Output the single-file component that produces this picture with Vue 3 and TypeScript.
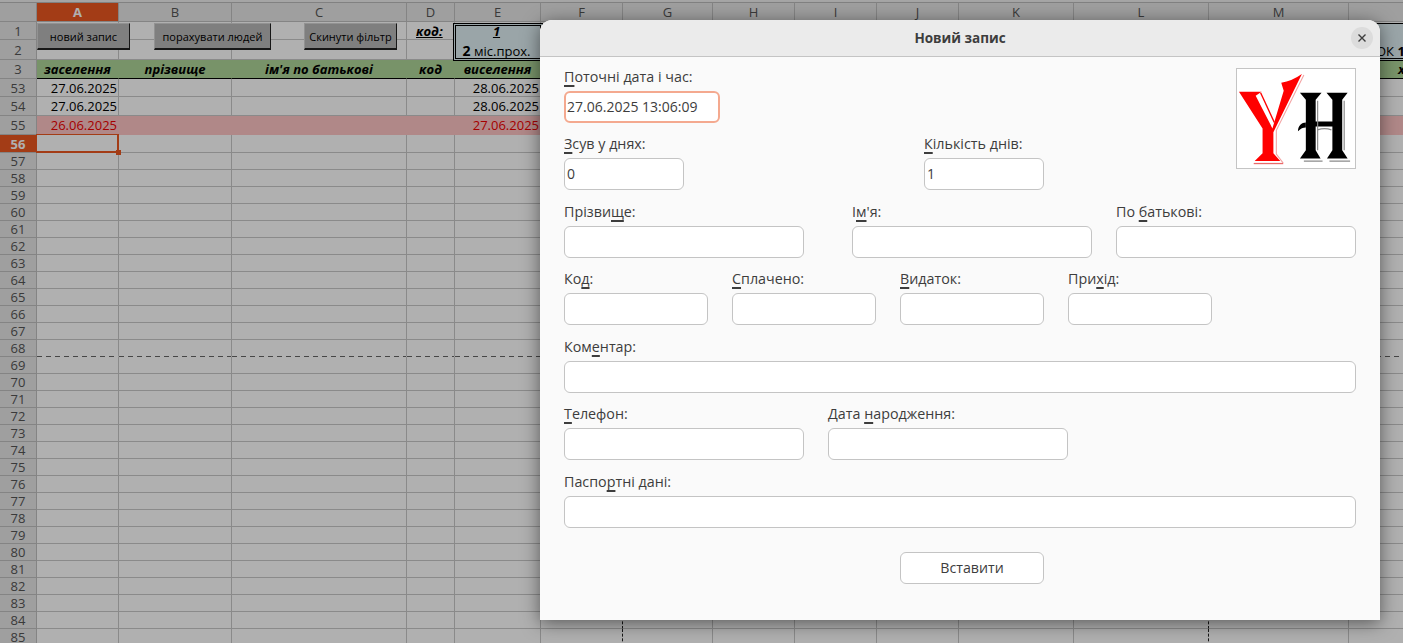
<template>
  <div class="screen">
    <div class="sheet">
      <div class="corner"></div>
      <div
        v-for="c in columns"
        :key="c"
        class="col-head"
        :class="{ 'col-head--active': c === 'A' }"
      >{{ c }}</div>

      <template v-for="r in rows" :key="r.label">
        <div class="row-head" :class="{ 'row-head--active': r.label === '56' }">{{ r.label }}</div>
        <div
          v-for="c in columns"
          :key="c"
          class="cell"
          :class="[r.kind, `col-${c}`, { 'cell--page': r.label === '68', 'cell--vbreak': (c === 'F' || c === 'L') && r.kind === 'plain' }]"
        >{{ cellText(r.label, c) }}<i v-if="r.label === '56' && c === 'A'" class="cursor"></i></div>
      </template>
    </div>

    <div class="drawing-layer">
      <button class="sheet-btn btn-new">новий запис</button>
      <button class="sheet-btn btn-count">порахувати людей</button>
      <button class="sheet-btn btn-reset">Скинути фільтр</button>
      <span class="code-label">код:</span>
      <div class="code-box">
        <u>1</u>
        <span><b>2</b> міс.прох.</span>
      </div>
      <div class="ok-box">ОК <b>1</b></div>
    </div>

    <div class="overlay"></div>

    <section class="dialog">
      <header class="dialog-title">
        <span>Новий запис</span>
        <button class="close-btn" title="Закрити">
          <svg viewBox="0 0 16 16" width="16" height="16"><path d="M4.5 4.5l7 7M11.5 4.5l-7 7" stroke="#3d3d3d" stroke-width="1.4" fill="none"/></svg>
        </button>
      </header>

      <form class="form" @submit.prevent>
        <div class="top-block">
          <div class="top-left">
            <label class="field now-field">
              <span><u>П</u>оточні дата і час:</span>
              <input class="input input--focus" value="27.06.2025 13:06:09" />
            </label>
            <div class="row row-shift">
              <label class="field">
                <span><u>З</u>сув у днях:</span>
                <input class="input" value="0" />
              </label>
              <label class="field">
                <span><u>К</u>ількість днів:</span>
                <input class="input" value="1" />
              </label>
            </div>
          </div>
          <svg class="logo" viewBox="0 0 120 100" preserveAspectRatio="none">
            <!-- Y -->
            <path d="M2 23H25L19 27L36 60L47.5 22L45 14Q56 12 66 5L37 64V85L44 93H18L26 85V60Z" fill="#f00"/>
            <path d="M24 24L38 54" stroke="#f00" stroke-width="1.4" fill="none"/>
            <path d="M68 6L40 62V86L47 95" stroke="#f3a3a3" stroke-width="1.1" fill="none"/>
            <path d="M17 95.5H47" stroke="#ea6a6a" stroke-width="1.3"/>
            <!-- H -->
            <path d="M64 24H86L80 31V53H97V31L91 24H112.5L107 31V82L112.5 90.5H91.5L97 82V58H80V82L85 90.5H64L70 82V31Z" fill="#000"/>
            <path d="M62 63C62 57 66 54 70 54V59C67 59 65 60 62 63Z" fill="#000"/>
            <path d="M82 32V82M109 32V82M82 61.5C86 60 92 60 96 61.5M68 93H87M94 93H115" stroke="#8a8a8a" stroke-width="1.2" fill="none"/>
          </svg>
        </div>

        <div class="row row-names">
          <label class="field"><span>Прізви<u>щ</u>е:</span><input class="input" /></label>
          <label class="field"><span>І<u>м</u>'я:</span><input class="input" /></label>
          <label class="field"><span>По <u>б</u>атькові:</span><input class="input" /></label>
        </div>

        <div class="row row-money">
          <label class="field"><span>Ко<u>д</u>:</span><input class="input" /></label>
          <label class="field"><span><u>С</u>плачено:</span><input class="input" /></label>
          <label class="field"><span><u>В</u>идаток:</span><input class="input" /></label>
          <label class="field"><span>При<u>х</u>ід:</span><input class="input" /></label>
        </div>

        <label class="field"><span>Ком<u>е</u>нтар:</span><input class="input" /></label>

        <div class="row row-phone">
          <label class="field"><span><u>Т</u>елефон:</span><input class="input" /></label>
          <label class="field"><span>Дата <u>н</u>ародження:</span><input class="input" /></label>
        </div>

        <label class="field"><span>Паспо<u>р</u>тні дані:</span><input class="input" /></label>

        <div class="actions">
          <button class="submit-btn">Вставити</button>
        </div>
      </form>
    </section>
  </div>
</template>

<script setup lang="ts">
type RowKind = 'tall' | 'head' | 'data' | 'plain' | 'alert'

const columns = ['A', 'B', 'C', 'D', 'E', 'F', 'G', 'H', 'I', 'J', 'K', 'L', 'M', 'N']

const rows: { label: string; kind: RowKind }[] = [
  { label: '1', kind: 'tall' },
  { label: '2', kind: 'tall' },
  { label: '3', kind: 'head' },
  { label: '53', kind: 'data' },
  { label: '54', kind: 'data' },
  { label: '55', kind: 'alert' },
  { label: '56', kind: 'data' },
]
for (let i = 57; i <= 85; i++) rows.push({ label: String(i), kind: 'plain' })

const cells: Record<string, Record<string, string>> = {
  '3': { A: 'заселення', B: 'прізвище', C: "ім'я по батькові", D: 'код', E: 'виселення', N: 'х' },
  '53': { A: '27.06.2025', E: '28.06.2025' },
  '54': { A: '27.06.2025', E: '28.06.2025' },
  '55': { A: '26.06.2025', E: '27.06.2025' },
}

function cellText(row: string, col: string) {
  return cells[row]?.[col] ?? ''
}
</script>

<style>
html, body {
  margin: 0;
  overflow: hidden;
}
</style>

<style scoped>
.screen {
  position: relative;
  width: 1403px;
  height: 643px;
  overflow: hidden;
  background: #f0f0f0;
  font-family: "Open Sans", "Noto Sans", sans-serif;
}

/* sheet */
.sheet {
  isolation: isolate;
  display: grid;
  grid-template-columns: 37px 82px 113px 175px 48px 86px 82px 90px 82px 82px 82px 115px 135px 140px 140px;
  grid-template-rows: 22px 18px 20px 19px 18px 19px 19px 18px repeat(29, 17px);
  font-size: 13px;
  color: #000;
}

.corner,
.col-head,
.row-head {
  background: #e6e6e6;
  color: #555;
  display: flex;
  align-items: center;
  justify-content: center;
  box-sizing: border-box;
  border-right: 1px solid #c0c0c0;
  border-bottom: 1px solid #c0c0c0;
}

.corner,
.col-head {
  margin-top: 2px;
  border-top: 1px solid #bcbcbc;
}

.col-head--active,
.row-head--active {
  background: #ec5721;
  color: #fff;
  font-weight: 700;
}

.cell {
  position: relative;
  box-sizing: border-box;
  border-right: 1px solid #c8c8c8;
  border-bottom: 1px solid #c8c8c8;
  background: #fff;
  text-align: right;
  line-height: 18px;
  white-space: nowrap;
  padding-right: 1px;
}

.cell.head {
  background: #aed598;
  border-right-color: #aed598;
  border-bottom: 1px solid #000;
  text-align: center;
  font-weight: 700;
  font-style: italic;
  padding: 0;
}

.cell.head.col-N {
  text-align: left;
  padding-left: 49px;
}

.cell.alert {
  background: #ffc5c5;
  border-right-color: #ffc5c5;
  border-bottom-color: #ffc5c5;
  color: #f00000;
}

.cell--page {
  border-bottom-color: transparent;
  background-image: linear-gradient(90deg, #666 5px, transparent 5px);
  background-origin: border-box;
  background-clip: border-box;
  background-position: 0 100%;
  background-size: 9px 1px;
  background-repeat: repeat-x;
}

.cell--vbreak {
  border-right-color: #222;
  border-right-style: dashed;
}

.cursor {
  position: absolute;
  inset: -1px;
  z-index: 2;
  border: 1px solid #ec5721;
  border-right-width: 2px;
  border-bottom-width: 2px;
}

.cursor::after {
  content: "";
  position: absolute;
  right: -4px;
  bottom: -4px;
  width: 5px;
  height: 5px;
  background: #ec5721;
}

/* drawing layer of the sheet */
.drawing-layer {
  position: absolute;
  inset: 0;
}

.sheet-btn {
  position: absolute;
  top: 23px;
  height: 27px;
  box-sizing: border-box;
  padding: 0;
  font-family: "Open Sans", sans-serif;
  font-size: 11px;
  color: #000;
  background: #b8b8b8;
  border: 1px solid #d4d4d4;
  border-right: 1px solid #222;
  border-bottom: 2px solid #222;
}

.btn-new { left: 37px; width: 93px; }
.btn-count { left: 154px; width: 117px; }
.btn-reset { left: 304px; width: 93px; }

.code-label {
  position: absolute;
  left: 416px;
  top: 22px;
  font-size: 13px;
  font-weight: 700;
  font-style: italic;
  text-decoration: underline;
}

.code-box {
  position: absolute;
  left: 453px;
  top: 23px;
  width: 90px;
  height: 38px;
  box-sizing: border-box;
  padding-right: 3px;
  border: 3px double #000;
  background: #dfeff3;
  display: flex;
  flex-direction: column;
  align-items: center;
  font-size: 13px;
  line-height: 18px;
}

.code-box u {
  margin-top: -4px;
  font-weight: 700;
  font-style: italic;
}

.code-box span {
  margin-top: 2px;
}

.code-box b {
  font-size: 14px;
}

.ok-box {
  position: absolute;
  left: 1340px;
  top: 23px;
  right: 0;
  height: 38px;
  box-sizing: border-box;
  padding: 18px 0 0 36px;
  border-top: 1px solid #000;
  border-bottom: 3px double #000;
  background: #dfeff3;
  font-size: 13px;
  line-height: 18px;
  white-space: nowrap;
}

.overlay {
  position: absolute;
  inset: 0;
  background: rgba(0, 0, 0, 0.31);
}

/* dialog */
.dialog {
  position: absolute;
  left: 540px;
  top: 20px;
  width: 840px;
  height: 600px;
  background: #fafafa;
  border-radius: 12px 12px 0 0;
  box-shadow: 0 3px 18px rgba(0, 0, 0, 0.5);
  color: #3d3d3d;
  font-size: 14.3px;
}

.dialog-title {
  position: relative;
  height: 36px;
  display: flex;
  align-items: center;
  justify-content: center;
  background: #ebebeb;
  border-bottom: 1px solid #c4c4c4;
  border-radius: 12px 12px 0 0;
  font-weight: 700;
  font-size: 13.5px;
  line-height: 34px;
}

.close-btn {
  position: absolute;
  right: 7px;
  top: 7px;
  width: 22px;
  height: 22px;
  padding: 0;
  display: flex;
  align-items: center;
  justify-content: center;
  border: 0;
  border-radius: 50%;
  background: #dcdcdc;
}

.form {
  display: flex;
  flex-direction: column;
  gap: 12.5px;
  padding: 10.9px 24px 0;
}

.field {
  display: flex;
  flex-direction: column;
  gap: 3px;
}

.field > span {
  height: 20px;
  line-height: 18px;
  white-space: nowrap;
}

.field u {
  text-decoration-thickness: 2px;
  text-underline-offset: 3px;
  text-decoration-skip-ink: none;
}

.input {
  box-sizing: border-box;
  width: 100%;
  height: 32px;
  padding: 0 2px 2px;
  background: #fff;
  border: 1px solid #c4c4c4;
  border-radius: 6px;
  font-family: inherit;
  font-size: 14px;
  color: #3d3d3d;
  outline: none;
}

.input--focus {
  padding: 0 1px;
  border: 2px solid #f4a98f;
}

.top-block {
  display: flex;
  justify-content: space-between;
  align-items: flex-start;
}

.top-left {
  display: flex;
  flex-direction: column;
  gap: 12.5px;
}

.now-field {
  width: 156px;
}

.row {
  display: grid;
  align-items: start;
}

.row-shift {
  grid-template-columns: 120px 120px;
  column-gap: 240px;
}

.row-names {
  grid-template-columns: 264px 240px 240px;
  column-gap: 24px;
}

.row-names > .field:first-child {
  width: 240px;
}

.row-money {
  grid-template-columns: repeat(4, 144px);
  column-gap: 24px;
}

.row-phone {
  grid-template-columns: 240px 240px;
  column-gap: 24px;
}

.logo {
  box-sizing: border-box;
  width: 120px;
  height: 101px;
  border: 1px solid #c4c4c4;
  background: #fff;
}

.actions {
  display: flex;
  justify-content: center;
  margin-top: 11.6px;
  padding-left: 24px;
}

.submit-btn {
  box-sizing: border-box;
  width: 144px;
  height: 32px;
  background: #fff;
  border: 1px solid #c4c4c4;
  border-radius: 6px;
  font-family: inherit;
  font-size: 14.2px;
  color: #3d3d3d;
}
</style>
